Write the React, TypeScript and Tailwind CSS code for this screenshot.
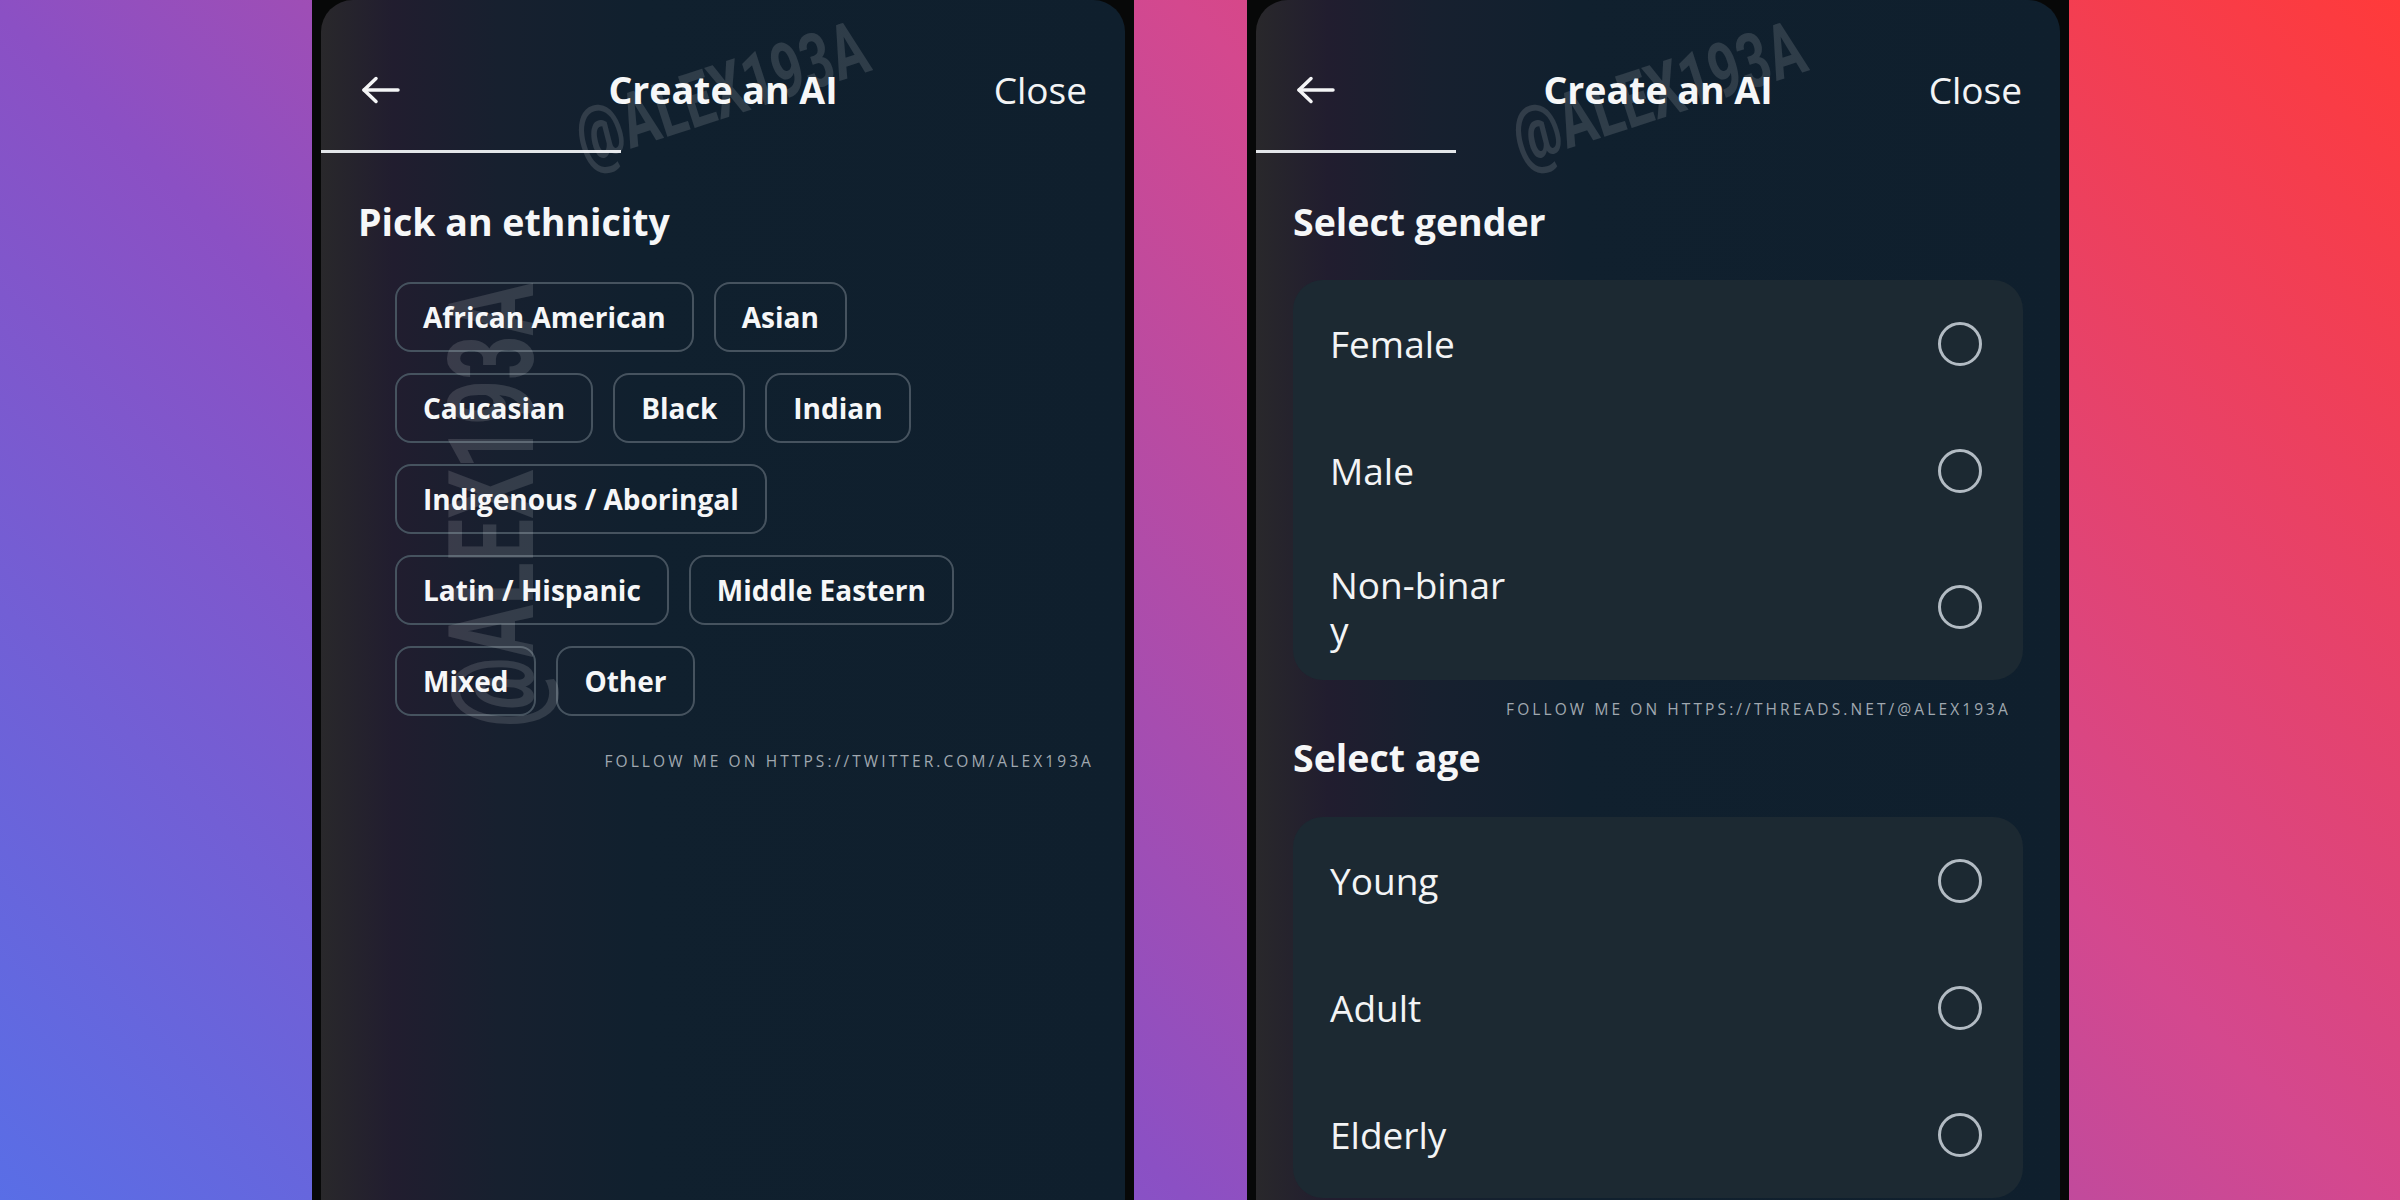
import React from 'react';

const font = { fontFamily: '"Open Sans", "Noto Sans", sans-serif' };

const BackArrow = () => (
  <svg width="40" height="28" viewBox="0 0 40 28" fill="none" stroke="#f4f5f6" strokeWidth="3.5" strokeLinecap="round" strokeLinejoin="round">
    <path d="M3 14H37" />
    <path d="M15 2.5L3 14L15 25.5" />
  </svg>
);

const Watermark = ({ className }: { className: string }) => (
  <div
    className={`pointer-events-none absolute whitespace-nowrap font-bold text-white/[0.13] ${className}`}
    style={{ fontFamily: 'Roboto, "Liberation Sans", sans-serif' }}
  >
    @ALEX193A
  </div>
);

const Header = ({ progress }: { progress: string }) => (
  <>
    <div className="grid h-[150px] grid-cols-[1fr_auto_1fr] items-center px-[38px] pt-[30px]">
      <div className="flex pl-[2px]">
        <BackArrow />
      </div>
      <p className="text-[37.5px] leading-[46px] font-bold text-[#f6f7f8]">Create an AI</p>
      <p className="text-right text-[37px] leading-[46px] text-[#f3f4f5]">Close</p>
    </div>
    <div className={`h-[3px] bg-[#e3e6e9] ${progress}`} />
  </>
);

const Heading = ({ children, className }: { children: React.ReactNode; className: string }) => (
  <p className={`px-[37px] text-[37.5px] leading-[46px] font-bold text-[#f6f7f8] ${className}`}>{children}</p>
);

const Footer = ({ children, className }: { children: React.ReactNode; className: string }) => (
  <p className={`text-right text-[15.5px] leading-[20px] font-medium tracking-[0.2em] text-[#a0a8b0] ${className}`}>
    {children}
  </p>
);

const chipRows = [
  ['African American', 'Asian'],
  ['Caucasian', 'Black', 'Indian'],
  ['Indigenous / Aboringal'],
  ['Latin / Hispanic', 'Middle Eastern'],
  ['Mixed', 'Other'],
];

const Chip = ({ label }: { label: string }) => (
  <div className="flex h-[70px] items-center rounded-[16px] border-2 border-[#46535f] px-[26px]">
    <span className="text-[28px] font-bold text-[#f6f7f8]">{label}</span>
  </div>
);

const Radio = () => <div className="h-[44px] w-[44px] shrink-0 rounded-full border-[3px] border-[#b2bbc3]" />;

const OptionCard = ({ options, className }: { options: React.ReactNode[]; className: string }) => (
  <div className={`mx-[37px] rounded-[30px] bg-[#1c2932] ${className}`}>
    {options.map((opt, i) => (
      <div key={i} className="flex min-h-[127px] items-center justify-between py-[28px] pr-[41px] pl-[37px]">
        <p className="text-[37px] leading-[45px] text-[#f3f4f5]">{opt}</p>
        <Radio />
      </div>
    ))}
  </div>
);

const screenBg =
  'bg-[linear-gradient(to_right,#29282b_0%,#211d2f_9%,#17202f_22%,#10202e_40%,#0f1f2d_100%)]';

export default function App() {
  return (
    <div
      className="flex h-[1200px] w-[2400px] gap-[113px] overflow-hidden bg-[linear-gradient(45deg,#596ee6_0%,#8b50c4_33%,#d4488e_66%,#ff3a3a_100%)] pl-[312px]"
      style={font}
    >
      <div className="h-full w-[822px] bg-[#070808] px-[9px]">
        <div className={`relative h-full overflow-hidden rounded-t-[32px] ${screenBg}`}>
          <Watermark className="top-[92px] left-[400px] text-[76px] leading-none [transform:translate(-50%,-50%)_rotate(-18deg)_scaleX(0.7)]" />
          <Watermark className="top-[505px] left-[172px] text-[118px] leading-none [transform:translate(-50%,-50%)_rotate(-90deg)_scaleX(0.66)]" />
          <Header progress="w-[300px]" />
          <Heading className="mt-[46px]">Pick an ethnicity</Heading>
          <div className="mt-[37px] flex flex-col gap-[21px] pl-[74px]">
            {chipRows.map((row, i) => (
              <div key={i} className="flex gap-[20px]">
                {row.map((label) => (
                  <Chip key={label} label={label} />
                ))}
              </div>
            ))}
          </div>
          <Footer className="mt-[35px] pr-[31px]">FOLLOW ME ON HTTPS://TWITTER.COM/ALEX193A</Footer>
        </div>
      </div>

      <div className="h-full w-[822px] bg-[#070808] px-[9px]">
        <div className={`relative h-full overflow-hidden rounded-t-[32px] ${screenBg}`}>
          <Watermark className="top-[92px] left-[402px] text-[76px] leading-none [transform:translate(-50%,-50%)_rotate(-18deg)_scaleX(0.7)]" />
          <Header progress="w-[200px]" />
          <Heading className="mt-[46px]">Select gender</Heading>
          <OptionCard
            className="mt-[35px]"
            options={[
              'Female',
              'Male',
              <>
                Non-binar
                <br />y
              </>,
            ]}
          />
          <Footer className="mt-[19px] pr-[49px]">FOLLOW ME ON HTTPS://THREADS.NET/@ALEX193A</Footer>
          <Heading className="mt-[16px]">Select age</Heading>
          <OptionCard className="mt-[36px]" options={['Young', 'Adult', 'Elderly']} />
        </div>
      </div>
    </div>
  );
}
